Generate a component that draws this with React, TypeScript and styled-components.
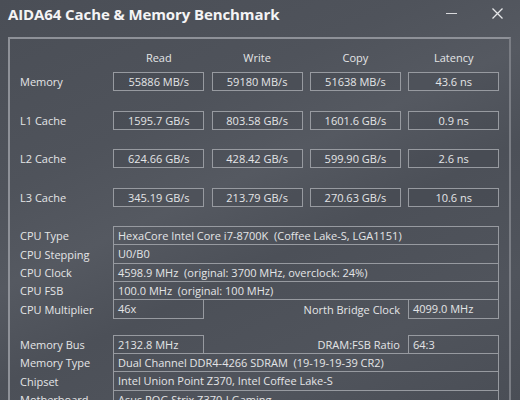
import styled, { createGlobalStyle } from 'styled-components';

const GlobalStyle = createGlobalStyle`
  html, body {
    margin: 0;
    padding: 0;
    background: #4b4f57;
  }
  * {
    box-sizing: border-box;
  }
`;

const Window = styled.div`
  width: 520px;
  height: 400px;
  overflow: hidden;
  font-family: 'Open Sans', 'Noto Sans', sans-serif;
  font-size: 11px;
  color: #e4e5e7;
  background: linear-gradient(155deg, #4a4e56 0%, #4f535b 30%, #555961 45%, #4c5058 60%, #50545c 80%, #4a4e56 100%);
`;

const TitleBar = styled.div`
  height: 37px;
  display: flex;
  align-items: flex-start;
  justify-content: space-between;
  padding: 4px 0 0 8px;
`;

const Title = styled.h1`
  margin: 0;
  font-size: 15px;
  font-weight: 700;
  color: #f4f4f5;
  letter-spacing: -0.1px;
`;

const WinButtons = styled.div`
  display: flex;
  align-items: center;
  gap: 35px;
  padding: 4px 17px 0 0;
`;

const Group = styled.div`
  margin: 0 9px 0 8px;
  border-top: 2px solid #8e9198;
  border-left: 2px solid #8e9198;
  border-right: 2px solid #7a7d84;
  height: 363px;
  padding: 9px 0 0 10px;
`;

const BenchGrid = styled.div`
  display: grid;
  grid-template-columns: 86px repeat(4, 91px);
  column-gap: 7.3px;
  row-gap: 19.7px;
  align-items: center;
`;

const Header = styled.div`
  text-align: center;
  height: 19px;
  line-height: 19px;
  margin-bottom: -14.7px;
`;

const Label = styled.div`
  white-space: nowrap;
`;

const ValueBox = styled.div`
  height: 19px;
  border: 1px solid #979aa0;
  background: rgba(60, 63, 70, 0.25);
  text-align: center;
  line-height: 17px;
  white-space: nowrap;
`;

const InfoSection = styled.div<{ $top: number }>`
  margin-top: ${(p) => p.$top}px;
  width: 479px;
`;

const InfoRow = styled.div`
  display: grid;
  grid-template-columns: 93px 1fr;
  height: 19.33px;
  margin-top: -1px;
  align-items: center;
  &:first-child {
    margin-top: 0;
  }
`;

const SplitCell = styled.div`
  display: grid;
  grid-template-columns: 91px 1fr 91px;
  column-gap: 8px;
  height: 100%;
  align-items: center;
`;

const Field = styled.div`
  height: 100%;
  border: 1px solid #979aa0;
  padding-left: 4px;
  line-height: 17px;
  white-space: nowrap;
  overflow: hidden;
`;

const SideLabel = styled.div`
  text-align: right;
  white-space: nowrap;
`;

const bench = [
  { name: 'Memory', vals: ['55886 MB/s', '59180 MB/s', '51638 MB/s', '43.6 ns'] },
  { name: 'L1 Cache', vals: ['1595.7 GB/s', '803.58 GB/s', '1601.6 GB/s', '0.9 ns'] },
  { name: 'L2 Cache', vals: ['624.66 GB/s', '428.42 GB/s', '599.90 GB/s', '2.6 ns'] },
  { name: 'L3 Cache', vals: ['345.19 GB/s', '213.79 GB/s', '270.63 GB/s', '10.6 ns'] },
];

const App = () => {
  return (
    <Window>
      <GlobalStyle />
      <TitleBar>
        <Title>AIDA64 Cache &amp; Memory Benchmark</Title>
        <WinButtons>
          <svg width="11" height="11" viewBox="0 0 11 11">
            <line x1="0" y1="5.5" x2="11" y2="5.5" stroke="#d8d9dc" strokeWidth="1" />
          </svg>
          <svg width="11" height="11" viewBox="0 0 11 11">
            <path d="M0.5 0.5 L10.5 10.5 M10.5 0.5 L0.5 10.5" stroke="#e6e7e9" strokeWidth="1.3" />
          </svg>
        </WinButtons>
      </TitleBar>
      <Group>
        <BenchGrid>
          <div />
          <Header>Read</Header>
          <Header>Write</Header>
          <Header>Copy</Header>
          <Header>Latency</Header>
          {bench.map((row) => (
            <>
              <Label key={row.name}>{row.name}</Label>
              {row.vals.map((v) => (
                <ValueBox key={row.name + v}>{v}</ValueBox>
              ))}
            </>
          ))}
        </BenchGrid>

        <InfoSection $top={19}>
          <InfoRow>
            <Label>CPU Type</Label>
            <Field>HexaCore Intel Core i7-8700K&nbsp; (Coffee Lake-S, LGA1151)</Field>
          </InfoRow>
          <InfoRow>
            <Label>CPU Stepping</Label>
            <Field>U0/B0</Field>
          </InfoRow>
          <InfoRow>
            <Label>CPU Clock</Label>
            <Field>4598.9 MHz&nbsp; (original: 3700 MHz, overclock: 24%)</Field>
          </InfoRow>
          <InfoRow>
            <Label>CPU FSB</Label>
            <Field>100.0 MHz&nbsp; (original: 100 MHz)</Field>
          </InfoRow>
          <InfoRow>
            <Label>CPU Multiplier</Label>
            <SplitCell>
              <Field>46x</Field>
              <SideLabel>North Bridge Clock</SideLabel>
              <Field>4099.0 MHz</Field>
            </SplitCell>
          </InfoRow>
        </InfoSection>

        <InfoSection $top={16}>
          <InfoRow>
            <Label>Memory Bus</Label>
            <SplitCell>
              <Field>2132.8 MHz</Field>
              <SideLabel>DRAM:FSB Ratio</SideLabel>
              <Field>64:3</Field>
            </SplitCell>
          </InfoRow>
          <InfoRow>
            <Label>Memory Type</Label>
            <Field>Dual Channel DDR4-4266 SDRAM&nbsp; (19-19-19-39 CR2)</Field>
          </InfoRow>
          <InfoRow>
            <Label>Chipset</Label>
            <Field>Intel Union Point Z370, Intel Coffee Lake-S</Field>
          </InfoRow>
          <InfoRow>
            <Label>Motherboard</Label>
            <Field>Asus ROG Strix Z370-I Gaming</Field>
          </InfoRow>
        </InfoSection>
      </Group>
    </Window>
  );
};

export default App;
